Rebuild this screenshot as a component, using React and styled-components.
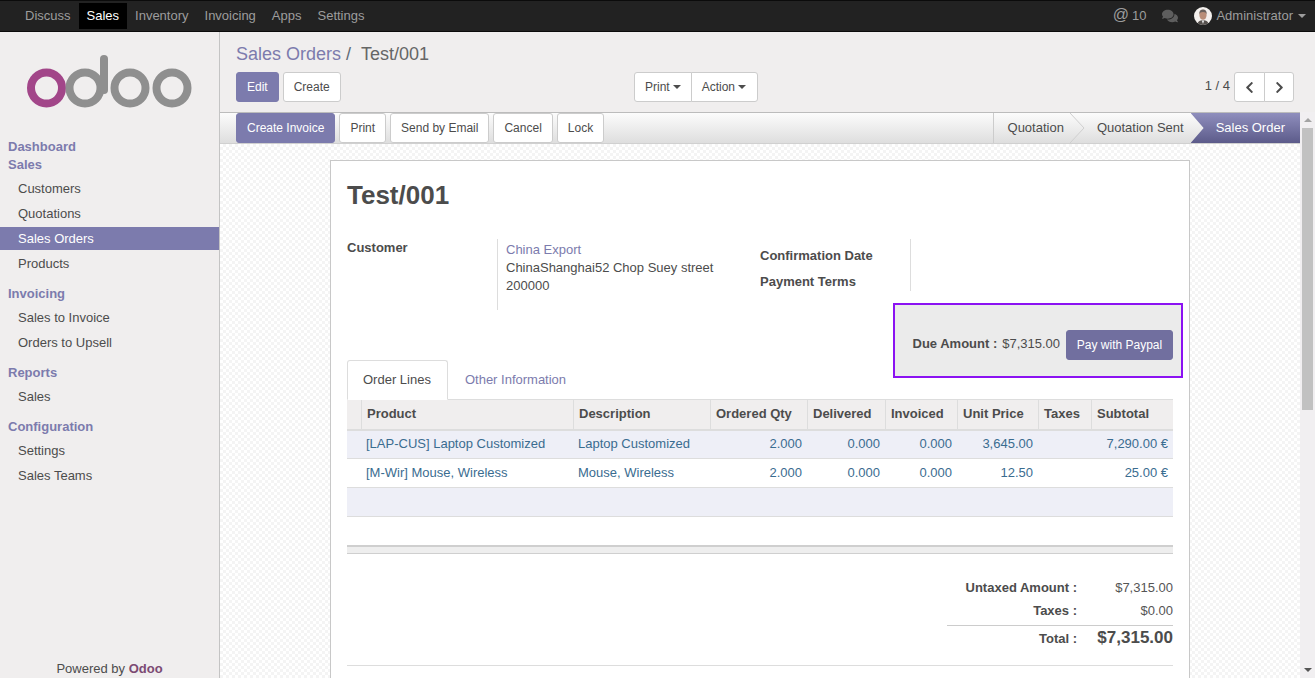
import React from "react";
import styled, { createGlobalStyle } from "styled-components";
import { FaComments, FaChevronLeft, FaChevronRight } from "react-icons/fa";

const Global = createGlobalStyle`
  html, body { margin: 0; padding: 0; height: 100%; overflow: hidden; }
  body { font-family: "Liberation Sans", Arial, sans-serif; font-size: 13px; color: #4c4c4c; }
  * { box-sizing: border-box; }
`;

const Page = styled.div`display:flex;flex-direction:column;height:100vh;overflow:hidden;`;
const Navbar = styled.header`
  flex:none;height:32px;background:#222;border-top:1px solid #0b0b0b;border-bottom:1px solid #0b0b0b;
  display:flex;align-items:center;padding:0 9px 0 17px;
`;
const NavItem = styled.a`
  height:26px;padding:0 8px 1px;display:flex;align-items:center;
  color:${p => (p.$active ? "#fff" : "#9d9d9d")};background:${p => (p.$active ? "#000" : "transparent")};
`;
const NavRight = styled.div`margin-left:auto;display:flex;align-items:center;color:#9d9d9d;padding-bottom:1px;`;
const At = styled.span`font-size:16px;line-height:20px;margin-right:3px;position:relative;top:-1px;`;
const Count = styled.span`margin-right:16px;`;
const Chat = styled.span`display:flex;margin-right:16px;color:#5e5e5e;font-size:16px;`;
const AvatarWrap = styled.svg`width:18px;height:18px;margin-right:4px;border-radius:50%;`;
const CaretDown = styled.i`
  display:inline-block;width:0;height:0;border-left:4px solid transparent;border-right:4px solid transparent;
  border-top:4px solid ${p => p.$color || "currentColor"};margin-left:${p => p.$gap || 3}px;
`;

const Body = styled.div`flex:1;display:flex;min-height:0;`;
const Sidebar = styled.aside`
  flex:none;width:220px;background:#f0eeee;border-right:1px solid #c4c4c4;display:flex;flex-direction:column;
`;
const LogoBox = styled.div`height:106px;padding:22px 0 0 26px;flex:none;`;
const Menu = styled.nav`display:flex;flex-direction:column;`;
const MenuHead = styled.div`
  font-weight:bold;color:#7c7bad;line-height:18px;padding-left:8px;
  margin-top:${p => (p.$first || p.$tight ? 0 : 8)}px;margin-bottom:${p => (p.$first ? 0 : 3)}px;
`;
const MenuItem = styled.a`
  height:23px;line-height:23px;padding-left:18px;margin-bottom:2px;
  color:${p => (p.$active ? "#fff" : "#4c4c4c")};background:${p => (p.$active ? "#7c7bad" : "transparent")};
`;
const Powered = styled.div`margin-top:auto;text-align:center;padding-bottom:1px;line-height:16px;`;
const PoweredBrand = styled.b`color:#7c4a72;`;

const Main = styled.main`flex:1;min-width:0;display:flex;flex-direction:column;`;
const ControlPanel = styled.div`
  flex:none;height:80px;background:#f0eeee;padding:12px 21px 0 16px;
`;
const Breadcrumb = styled.div`font-size:18px;line-height:20px;color:#5f6b76;`;
const Crumb = styled.a`color:#7c7bad;`;
const CrumbCurrent = styled.span`margin-left:5px;color:#666;`;
const ControlRow = styled.div`display:grid;grid-template-columns:398px auto 1fr;margin-top:8px;`;
const BtnRow = styled.div`display:flex;gap:4px;`;
const BtnGroup = styled.div`display:flex;& > button + button{margin-left:-1px;}`;
const Btn = styled.button`
  height:30px;padding:0 10px;font:12px "Liberation Sans",Arial,sans-serif;border-radius:3px;
  border:1px solid ${p => (p.$primary ? "#7c7bad" : "#ccc")};
  background:${p => (p.$primary ? "#7c7bad" : "#fff")};color:${p => (p.$primary ? "#fff" : "#4c4c4c")};
  display:flex;align-items:center;justify-content:center;
`;
const GroupBtn = styled(Btn)`
  border-radius:${p => (p.$left ? "3px 0 0 3px" : "0 3px 3px 0")};
  padding-right:${p => (p.$left ? 10 : 11)}px;
`;
const PagerBtn = styled(GroupBtn)`width:${p => (p.$left ? 31 : 30)}px;padding:0;font-size:13px;color:#4c4c4c;`;
const Pager = styled.div`display:flex;align-items:center;justify-content:flex-end;`;
const PagerText = styled.span`margin-right:4px;padding-bottom:3px;`;

const ContentRow = styled.div`flex:1;display:flex;min-height:0;`;
const Scroller = styled.div`flex:1;min-width:0;display:flex;flex-direction:column;overflow:hidden;`;
const StatusBar = styled.div`
  flex:none;height:32px;display:flex;justify-content:space-between;padding-left:16px;
  border-top:1px solid #bcbcbc;border-bottom:1px solid #d0d0d0;
  background:linear-gradient(#fcfcfc,#dedede);
`;
const StatusBtns = styled.div`display:flex;gap:4px;`;
const Steps = styled.div`display:flex;border-left:1px solid #ccc;`;
const Step = styled.div`
  position:relative;display:flex;align-items:center;height:30px;
  padding:0 ${p => p.$pr}px 2px ${p => p.$pl}px;
  ${p => p.$active && `
    color:#fff;background:linear-gradient(#8f8ebd,#5c5b8a);
    clip-path:polygon(0 0,100% 0,100% 100%,0 100%,13px 50%);
  `}
`;
const StepChevron = styled.svg`position:absolute;left:0;top:0;width:15px;height:30px;`;

const Backdrop = styled.div`
  flex:1;min-height:0;padding:16px 0 0 110px;overflow:hidden;
  background-color:#fff;
  background-image:repeating-conic-gradient(#f4f4f4 0 25%,#fff 0 50%);
  background-size:6px 6px;
`;
const Sheet = styled.div`
  width:860px;background:#fff;border:1px solid #c8c8c8;padding:16px 16px 40px;min-height:600px;
`;
const Title = styled.h1`margin:0;font-size:26px;line-height:36px;color:#4c4c4c;font-weight:bold;height:62px;`;
const Groups = styled.div`display:flex;`;
const LeftGroup = styled.div`display:flex;width:413px;height:71px;`;
const FieldLabel = styled.div`font-weight:bold;width:150px;flex:none;line-height:16px;padding-top:1px;`;
const FieldValue = styled.div`flex:1;border-left:1px solid #ddd;padding:2px 0 0 8px;line-height:18px;`;
const ValueLink = styled.a`color:#7c7bad;display:block;`;
const RightGroup = styled.div`width:151px;height:52px;border-right:1px solid #ddd;padding-top:4px;`;
const RightLabel = styled.div`font-weight:bold;line-height:26px;`;
const DueRow = styled.div`display:flex;justify-content:flex-end;margin:-7px -10px -18px 0;position:relative;z-index:1;`;
const DueBox = styled.div`
  width:290px;height:75px;background:#ebebeb;border:2px solid #8b12f2;padding:25px 8px 16px 17.5px;
  display:flex;align-items:flex-start;
`;
const DueLabel = styled.b`margin:6px 5px 0 0;line-height:16px;white-space:nowrap;`;
const DueValue = styled.span`margin:6px 0 0 0;line-height:16px;white-space:nowrap;`;
const PayBtn = styled.button`
  width:107px;height:30px;flex:none;margin-left:auto;background:#716f9f;border:1px solid #716f9f;border-radius:3px;color:#fff;
  font:12px "Liberation Sans",Arial,sans-serif;padding:0;
`;
const Tabs = styled.div`display:flex;height:39px;position:relative;`;
const Tab = styled.a`
  height:40px;padding:0 16px 2px 15px;display:flex;align-items:center;position:relative;
  color:${p => (p.$active ? "#4c4c4c" : "#7c7bad")};
  background:${p => (p.$active ? "#fff" : "transparent")};
  border:1px solid ${p => (p.$active ? "#ddd" : "transparent")};
  border-bottom:1px solid ${p => (p.$active ? "#fff" : "transparent")};
  border-radius:3px 3px 0 0;z-index:1;
  margin-right:${p => (p.$active ? 1 : 0)}px;
`;
const Table = styled.table`width:826px;border-collapse:collapse;table-layout:fixed;`;
const Th = styled.th`
  height:30px;padding:0 5px 2px 5.5px;text-align:left;background:#f0eeee;font-weight:bold;color:#4c4c4c;
  border-top:1px solid #ddd;border-bottom:2px solid #ddd;border-left:1px solid #ddd;
  &:first-child{border-left:0;}
`;
const Td = styled.td`
  height:29px;padding:0 5px 2px ${p => (p.$num ? 0 : 5)}px;color:#3a6c90;border-bottom:1px solid #ddd;
  text-align:${p => (p.$num ? "right" : "left")};white-space:nowrap;
`;
const Tr = styled.tr`background:${p => (p.$tint ? "#eeeff7" : "#fff")};`;
const Separator = styled.div`
  margin-top:28px;height:9px;background:#eee;border-top:2px solid #cfcfcf;border-bottom:1px solid #cfcfcf;
`;
const Totals = styled.div`
  width:226px;margin:22px 0 0 auto;display:grid;grid-template-columns:130px 96px;
`;
const TotalLabel = styled.b`text-align:right;line-height:23px;`;
const TotalValue = styled.span`text-align:right;line-height:23px;color:#555;`;
const GrandLabel = styled.b`
  text-align:right;line-height:24px;border-top:1px solid #ccc;margin-top:3px;padding-top:1px;
`;
const GrandValue = styled.b`
  text-align:right;font-size:17px;line-height:24px;border-top:1px solid #ccc;margin-top:3px;
`;
const Rule = styled.div`height:1px;background:#ddd;margin-top:14px;`;

const Scrollbar = styled.div`
  flex:none;width:15px;background:#f1eff1;display:flex;flex-direction:column;align-items:center;
`;
const ArrowBtn = styled.div`
  flex:none;height:16px;width:100%;display:flex;align-items:center;justify-content:center;
`;
const ArrowUp = styled.i`
  width:0;height:0;border-left:4px solid transparent;border-right:4px solid transparent;border-bottom:4px solid #a3a3a3;
`;
const ArrowDown = styled.i`
  width:0;height:0;border-left:4px solid transparent;border-right:4px solid transparent;border-top:4px solid #555;
`;
const Thumb = styled.div`flex:none;width:11px;height:282px;background:#c1c1c1;`;
const Track = styled.div`flex:1;`;

const Logo = () => (
  <svg width="170" height="60" viewBox="0 0 170 60">
    <circle cx="20.5" cy="34" r="15.5" fill="none" stroke="#a24689" strokeWidth="8" />
    <g fill="none" stroke="#8f8f8f" strokeWidth="8">
      <circle cx="59" cy="34" r="15.5" />
      <path d="M78 36V5" strokeLinecap="round" />
      <circle cx="104" cy="34" r="15.5" />
      <circle cx="146" cy="34" r="15.5" />
    </g>
  </svg>
);

const Avatar = () => (
  <AvatarWrap viewBox="0 0 18 18">
    <rect width="18" height="18" fill="#f4f1ee" />
    <path d="M3 18c.5-3.6 3-4.8 6-4.8s5.500 1.200 6 4.800z" fill="#55504d" />
    <path d="M7.800 13.500h2.400L9 17z" fill="#eee" />
    <ellipse cx="9" cy="8" rx="3.600" ry="4.800" fill="#b98e78" />
    <path d="M5.300 7.500C5 3.800 7 2.600 9 2.600s4 1.200 3.700 4.900c-.6-1.800-1.500-2.500-3.700-2.500s-3.100.7-3.700 2.500z" fill="#6b625d" />
  </AvatarWrap>
);

const rows = [
  ["[LAP-CUS] Laptop Customized", "Laptop Customized", "2.000", "0.000", "0.000", "3,645.00", "", "7,290.00 €"],
  ["[M-Wir] Mouse, Wireless", "Mouse, Wireless", "2.000", "0.000", "0.000", "12.50", "", "25.00 €"],
];
const widths = [14, 212, 137, 97, 78, 72, 81, 53, 82];
const heads = ["", "Product", "Description", "Ordered Qty", "Delivered", "Invoiced", "Unit Price", "Taxes", "Subtotal"];

export default function App() {
  return (
    <Page>
      <Global />
      <Navbar>
        {["Discuss", "Sales", "Inventory", "Invoicing", "Apps", "Settings"].map(n => (
          <NavItem key={n} $active={n === "Sales"}>{n}</NavItem>
        ))}
        <NavRight>
          <At>@</At>
          <Count>10</Count>
          <Chat><FaComments /></Chat>
          <Avatar />
          Administrator
          <CaretDown $gap={5} />
        </NavRight>
      </Navbar>
      <Body>
        <Sidebar>
          <LogoBox><Logo /></LogoBox>
          <Menu>
            <MenuHead $first>Dashboard</MenuHead>
            <MenuHead $tight>Sales</MenuHead>
            <MenuItem>Customers</MenuItem>
            <MenuItem>Quotations</MenuItem>
            <MenuItem $active>Sales Orders</MenuItem>
            <MenuItem>Products</MenuItem>
            <MenuHead>Invoicing</MenuHead>
            <MenuItem>Sales to Invoice</MenuItem>
            <MenuItem>Orders to Upsell</MenuItem>
            <MenuHead>Reports</MenuHead>
            <MenuItem>Sales</MenuItem>
            <MenuHead>Configuration</MenuHead>
            <MenuItem>Settings</MenuItem>
            <MenuItem>Sales Teams</MenuItem>
          </Menu>
          <Powered>Powered by <PoweredBrand>Odoo</PoweredBrand></Powered>
        </Sidebar>
        <Main>
          <ControlPanel>
            <Breadcrumb><Crumb>Sales Orders</Crumb> / <CrumbCurrent>Test/001</CrumbCurrent></Breadcrumb>
            <ControlRow>
              <BtnRow>
                <Btn $primary>Edit</Btn>
                <Btn>Create</Btn>
              </BtnRow>
              <BtnGroup>
                <GroupBtn $left>Print<CaretDown /></GroupBtn>
                <GroupBtn>Action<CaretDown /></GroupBtn>
              </BtnGroup>
              <Pager>
                <PagerText>1 / 4</PagerText>
                <BtnGroup>
                  <PagerBtn $left><FaChevronLeft /></PagerBtn>
                  <PagerBtn><FaChevronRight /></PagerBtn>
                </BtnGroup>
              </Pager>
            </ControlRow>
          </ControlPanel>
          <ContentRow>
            <Scroller>
              <StatusBar>
                <StatusBtns>
                  <Btn $primary>Create Invoice</Btn>
                  <Btn>Print</Btn>
                  <Btn>Send by Email</Btn>
                  <Btn>Cancel</Btn>
                  <Btn>Lock</Btn>
                </StatusBtns>
                <Steps>
                  <Step $pl={14} $pr={6}>Quotation</Step>
                  <Step $pl={27} $pr={7}>
                    <StepChevron viewBox="0 0 15 30"><path d="M0 0l14 15L0 30" fill="none" stroke="#cfcfcf" /></StepChevron>
                    Quotation Sent
                  </Step>
                  <Step $pl={25} $pr={15} $active>Sales Order</Step>
                </Steps>
              </StatusBar>
              <Backdrop>
                <Sheet>
                  <Title>Test/001</Title>
                  <Groups>
                    <LeftGroup>
                      <FieldLabel>Customer</FieldLabel>
                      <FieldValue>
                        <ValueLink>China Export</ValueLink>
                        ChinaShanghai52 Chop Suey street<br />200000
                      </FieldValue>
                    </LeftGroup>
                    <RightGroup>
                      <RightLabel>Confirmation Date</RightLabel>
                      <RightLabel>Payment Terms</RightLabel>
                    </RightGroup>
                  </Groups>
                  <DueRow>
                    <DueBox>
                      <DueLabel>Due Amount :</DueLabel>
                      <DueValue>$7,315.00</DueValue>
                      <PayBtn>Pay with Paypal</PayBtn>
                    </DueBox>
                  </DueRow>
                  <Tabs>
                    <Tab $active>Order Lines</Tab>
                    <Tab>Other Information</Tab>
                  </Tabs>
                  <Table>
                    <colgroup>{widths.map((w, i) => <col key={i} width={w} />)}</colgroup>
                    <thead><tr>{heads.map((h, i) => <Th key={i}>{h}</Th>)}</tr></thead>
                    <tbody>
                      {rows.map((r, i) => (
                        <Tr key={i} $tint={i === 0}>
                          <Td />
                          {r.map((c, j) => <Td key={j} $num={j > 1}>{c}</Td>)}
                        </Tr>
                      ))}
                      <Tr $tint><Td colSpan={9} /></Tr>
                    </tbody>
                  </Table>
                  <Separator />
                  <Totals>
                    <TotalLabel>Untaxed Amount :</TotalLabel>
                    <TotalValue>$7,315.00</TotalValue>
                    <TotalLabel>Taxes :</TotalLabel>
                    <TotalValue>$0.00</TotalValue>
                    <GrandLabel>Total :</GrandLabel>
                    <GrandValue>$7,315.00</GrandValue>
                  </Totals>
                  <Rule />
                </Sheet>
              </Backdrop>
            </Scroller>
            <Scrollbar>
              <ArrowBtn><ArrowUp /></ArrowBtn>
              <Thumb />
              <Track />
              <ArrowBtn><ArrowDown /></ArrowBtn>
            </Scrollbar>
          </ContentRow>
        </Main>
      </Body>
    </Page>
  );
}
